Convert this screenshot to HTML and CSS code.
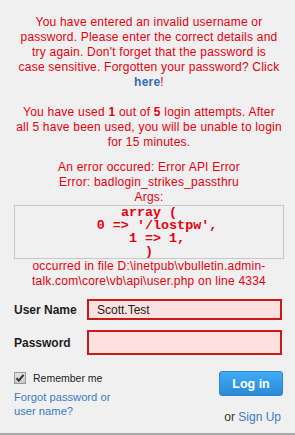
FILE: index.html
```html
<!DOCTYPE html>
<html lang="en">
<head>
    <meta charset="UTF-8">
    <meta name="viewport" content="width=device-width, initial-scale=1.0">
    <title>Log in</title>
    <link rel="stylesheet" href="styles.css">
</head>
<body>

    <div class="login-panel">
        <div class="login-error">
            <p>You have entered an invalid username or<br>password. Please enter the correct details and<br>try again. Don't forget that the password is<br>case sensitive. Forgotten your password? Click<br><a href="#">here</a>!</p>
            <p class="attempts">You have used <b>1</b> out of <b>5</b> login attempts. After<br>all 5 have been used, you will be unable to login<br>for 15 minutes.</p>
            <p class="api-error">An error occured: Error API Error<br>Error: badlogin_strikes_passthru<br>Args:</p>
            <pre class="error-args">array (
  0 => '/lostpw',
  1 => 1,
)</pre>
            <p>occurred in file D:\inetpub\vbulletin.admin-talk.com\core\vb\api\user.php on line 4334</p>
        </div>

        <form class="login-form">
            <div class="form-row">
                <label for="username">User Name</label>
                <input type="text" id="username" class="field-user" value="Scott.Test">
            </div>
            <div class="form-row">
                <label for="password">Password</label>
                <input type="password" id="password" class="field-pass">
            </div>

            <div class="form-footer">
                <div class="footer-left">
                    <label class="remember">
                        <span class="checkbox">
                            <svg width="10" height="10" viewBox="0 0 10 10">
                                <path d="M1.5 5.2 L3.8 7.6 L8.6 1.8" fill="none" stroke="#333" stroke-width="2"/>
                            </svg>
                        </span>
                        Remember me
                    </label>
                    <a href="#" class="forgot">Forgot password or user name?</a>
                </div>
                <div class="footer-right">
                    <button type="button" class="login-button">Log in</button>
                    <div class="signup">or <a href="#">Sign Up</a></div>
                </div>
            </div>
        </form>
    </div>

</body>
</html>
```

FILE: styles.css
```css
body {
    margin: 0;
    background-color: #f0f0f0;
    font-family: "Liberation Sans", Arial, sans-serif;
}

.login-panel {
    min-height: 100vh;
    box-sizing: border-box;
    padding: 15px 11px 0 14px;
    border-bottom: 2px solid #acacac;
}

.login-error {
    color: #e8000e;
    font-size: 12px;
    line-height: 15px;
    text-align: center;
}

.login-error p {
    margin: 0;
    letter-spacing: 0.22px;
}

.login-error a {
    color: #2f6fb8;
    font-weight: bold;
    text-decoration: none;
}

.login-error .attempts {
    margin-top: 15px;
}

.login-error .api-error {
    margin-top: 10px;
}

.error-args {
    margin: 0;
    border: 1px solid #c8c8c8;
    font-family: "Liberation Mono", "Courier New", monospace;
    font-size: 13.4px;
    font-weight: bold;
    line-height: 13px;
    text-align: center;
}

.login-form {
    margin-top: 10px;
}

.form-row {
    display: flex;
    align-items: center;
    margin-bottom: 10px;
}

.form-row label {
    width: 73px;
    font-size: 12px;
    font-weight: bold;
    color: #1e1e1e;
}

.form-row input {
    width: 195px;
    box-sizing: border-box;
    margin: 0;
    border: 2px solid #c81a1a;
    background-color: #fde0e0;
    font-family: "Liberation Sans", Arial, sans-serif;
    font-size: 12px;
    color: #222;
    padding: 0 8px;
    outline: none;
}

.field-user {
    height: 21px;
}

.field-pass {
    height: 25px;
}

.form-footer {
    display: flex;
    justify-content: space-between;
    padding-right: 1px;
    margin-top: 16px;
}

.footer-left {
    padding-top: 1px;
}

.remember {
    display: flex;
    align-items: center;
    gap: 7px;
    font-size: 10.5px;
    color: #222;
}

.checkbox {
    width: 10px;
    height: 10px;
    border: 1px solid #9a9a9a;
    background: linear-gradient(#e4e4e4, #c9c9c9);
    display: flex;
    align-items: center;
    justify-content: center;
}

.forgot {
    display: block;
    width: 110px;
    margin-top: 6px;
    font-size: 11.2px;
    line-height: 14px;
    color: #3b7cc3;
    text-decoration: none;
}

.footer-right {
    display: flex;
    flex-direction: column;
    align-items: flex-end;
}

.login-button {
    width: 64px;
    height: 25px;
    border: 1px solid #2a86d0;
    border-radius: 3px;
    background: linear-gradient(#40acf4, #2a8ad8);
    color: white;
    font-family: "Liberation Sans", Arial, sans-serif;
    font-size: 12.5px;
    font-weight: bold;
    cursor: pointer;
    padding: 0;
}

.signup {
    margin-top: 14px;
    margin-right: 2px;
    font-size: 12px;
    color: #333;
}

.signup a {
    color: #3b7cc3;
    text-decoration: none;
}
```
